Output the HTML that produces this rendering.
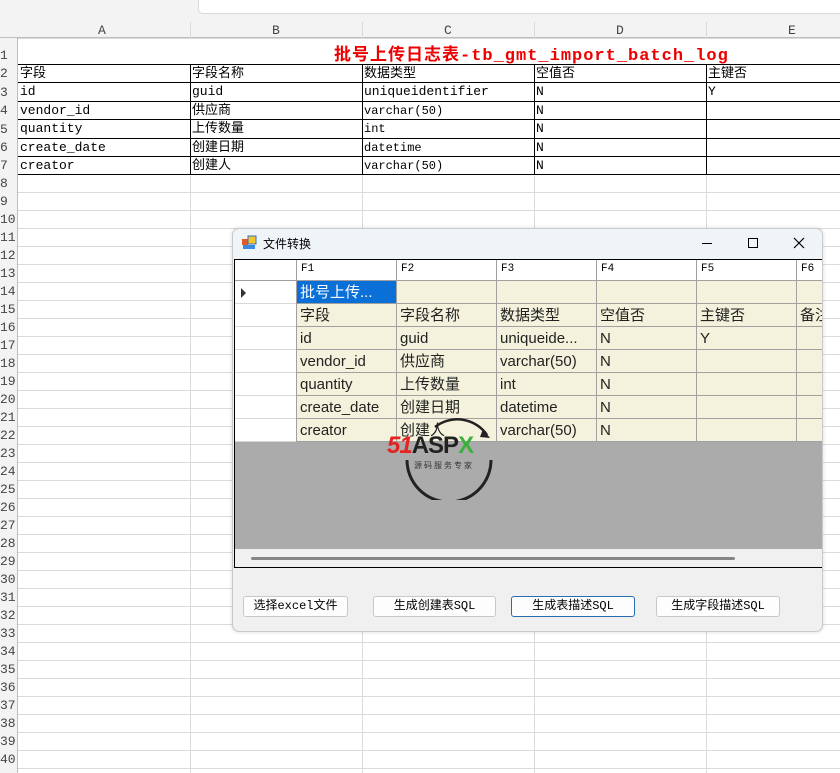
<!DOCTYPE html>
<html><head><meta charset="utf-8"><style>
*{margin:0;padding:0;box-sizing:border-box}
body{width:840px;height:773px;overflow:hidden;background:#fff;position:relative;font-family:"Liberation Mono","Noto Sans CJK SC",monospace;}
.a{position:absolute}
.hl{position:absolute;height:1px;background:#dadada}
.vl{position:absolute;width:1px;background:#dadada}
.rn{position:absolute;left:0;width:18px;font-size:13px;color:#444;text-align:left;padding-left:0}
.c{position:absolute;font-size:13px;color:#000;white-space:nowrap;line-height:18px}
.g{position:absolute;font-family:"Liberation Sans","Noto Sans CJK SC",sans-serif;font-size:15px;color:#222;white-space:nowrap;overflow:hidden;line-height:23px;padding-left:4px}
.btn{position:absolute;top:596px;height:21px;border:1px solid #c8c8c8;border-radius:3px;background:#fdfdfd;font-size:12px;text-align:center;line-height:19px;font-family:"Liberation Mono","Noto Sans CJK SC",monospace}
</style></head><body>
<div class="a" style="left:0;top:0;width:840px;height:22px;background:#f3f3f3"></div>
<div class="a" style="left:198px;top:-2px;width:650px;height:16px;background:#fff;border:1px solid #d9d9d9;border-radius:0 0 0 5px"></div>
<div class="a" style="left:0;top:22px;width:840px;height:16px;background:#f3f3f3;border-bottom:1px solid #bdbdbd"></div>
<div class="a" style="left:0;top:38px;width:18px;height:735px;background:#f3f3f3;border-right:1px solid #bdbdbd"></div>
<div id="grid"></div>
<div class="c" style="left:98px;top:22px;color:#444">A</div>
<div class="c" style="left:272px;top:22px;color:#444">B</div>
<div class="c" style="left:444px;top:22px;color:#444">C</div>
<div class="c" style="left:616px;top:22px;color:#444">D</div>
<div class="c" style="left:788px;top:22px;color:#444">E</div>
<div class="a" style="left:19px;top:39px;width:821px;height:25px;background:#fff"></div>
<div class="a" style="left:334px;top:40px;font-size:17px;font-weight:bold;color:#e00;white-space:nowrap;letter-spacing:1px;font-family:'Liberation Mono','Noto Sans CJK SC',monospace">批号上传日志表-tb_gmt_import_batch_log</div>
<div class="a" style="left:18px;top:64px;width:830px;height:111px;border-top:1px solid #000;border-bottom:1px solid #000"></div>
<div id="tb"></div>

<div class="a" style="left:232px;top:228px;width:591px;height:404px;background:#f0f0f0;border:1px solid #c9c9c9;border-radius:7px;box-shadow:0 0 4px rgba(0,0,0,.15)"></div>
<div class="a" style="left:233px;top:229px;width:589px;height:30px;background:#eff4f9;border-radius:7px 7px 0 0"></div>
<svg class="a" style="left:241px;top:235px" width="16" height="16"><rect x="1" y="4" width="6" height="6" fill="#e05a2b"/><rect x="7" y="1" width="8" height="8" fill="#f4c431" stroke="#3a6fc0"/><rect x="2" y="10" width="12" height="4" fill="#3a8be0"/></svg>
<div class="a" style="left:263px;top:235px;font-size:12px;font-family:'Liberation Sans','Noto Sans CJK SC',sans-serif">文件转换</div>
<div class="a" style="left:702px;top:243px;width:10px;height:1px;background:#000"></div>
<div class="a" style="left:748px;top:238px;width:10px;height:10px;border:1px solid #000"></div>
<svg class="a" style="left:793px;top:237px" width="12" height="12"><path d="M1 1L11 11M11 1L1 11" stroke="#000" stroke-width="1.2"/></svg>
<div class="a" style="left:234px;top:259px;width:588px;height:309px;border:1px solid #000;border-right:none;background:#ababab;overflow:hidden">
 <div id="dg"></div>
</div>
<svg class="a" style="left:395px;top:405px" width="110" height="95"><path d="M12 55 A42 42 0 0 0 96 55" fill="none" stroke="#222" stroke-width="3"/><path d="M40 22 A36 36 0 0 1 92 30" fill="none" stroke="#222" stroke-width="2.5"/><path d="M88 24 L95 33 L85 32Z" fill="#222"/></svg>
<div class="a" style="left:387px;top:432px;font:italic bold 24px 'Liberation Sans',sans-serif;color:#e52323;letter-spacing:-1px">51<span style="color:#222;font-style:normal">ASP</span><span style="color:#3ab03e;font-style:normal">X</span></div>
<div class="a" style="left:414px;top:460px;font-size:8px;color:#333;letter-spacing:2px;font-family:'Liberation Sans','Noto Sans CJK SC',sans-serif">源码服务专家</div>
<div class="btn" style="left:243px;width:105px">选择excel文件</div>
<div class="btn" style="left:373px;width:123px">生成创建表SQL</div>
<div class="btn" style="left:511px;width:124px;border-color:#2b6cb0">生成表描述SQL</div>
<div class="btn" style="left:656px;width:124px">生成字段描述SQL</div>
<script>
var h='';var y=64;var ys=[38,64];
for(var r=2;r<=40;r++){y+= r<=7?18.4:18;ys.push(Math.round(y));}
for(var i=0;i<ys.length;i++){h+='<div class="hl" style="left:18px;top:'+ys[i]+'px;width:822px"></div>';}
[190,362,534,706].forEach(function(x){h+='<div class="vl" style="left:'+x+'px;top:22px;height:751px"></div>';});
for(var r=1;r<=40;r++){var t=r==1?ys[1]-16:ys[r]-16;h+='<div class="rn" style="top:'+t+'px">'+r+'</div>';}
document.getElementById('grid').innerHTML=h;
var rows=[["字段","字段名称","数据类型","空值否","主键否"],["id","guid","uniqueidentifier","N","Y"],["vendor_id","供应商","varchar(50)","N",""],["quantity","上传数量","int","N",""],["create_date","创建日期","datetime","N",""],["creator","创建人","varchar(50)","N",""]];
var xs=[20,192,364,536,708];var t='';
rows.forEach(function(rw,i){var top=ys[i+1]+1;rw.forEach(function(v,j){t+='<div class="c" style="left:'+xs[j]+'px;top:'+top+'px;'+(/[a-z]/.test(v)&&j==2&&v!='uniqueidentifier'?'font-size:12px':'')+'">'+v+'</div>';});});
[190,362,534,706].forEach(function(x){t+='<div class="a" style="left:'+x+'px;top:64px;width:1px;height:111px;background:#000"></div>';});
for(var i=2;i<8;i++)t+='<div class="a" style="left:18px;top:'+ys[i]+'px;width:822px;height:1px;background:#000"></div>';
document.getElementById('tb').innerHTML=t;
var cx=[0,61,161,261,361,461,561],d='';
d+='<div class="a" style="left:0;top:0;width:588px;height:21px;background:#fff;border-bottom:1px solid #a0a0a0"></div>';
var hd=["F1","F2","F3","F4","F5","F6"];
for(var j=0;j<6;j++){d+='<div class="a" style="left:'+(cx[j+1]+5)+'px;top:3px;font-size:11px">'+hd[j]+'</div>';}
var data=[["批号上传...","","","","",""],["字段","字段名称","数据类型","空值否","主键否","备注"],["id","guid","uniqueide...","N","Y",""],["vendor_id","供应商","varchar(50)","N","",""],["quantity","上传数量","int","N","",""],["create_date","创建日期","datetime","N","",""],["creator","创建人","varchar(50)","N","",""]];
d+='<div class="a" style="left:0;top:21px;width:61px;height:160px;background:#fff"></div>';
d+='<div class="a" style="left:61px;top:21px;width:527px;height:160px;background:#f4f2dc"></div>';
data.forEach(function(rw,i){var top=21+i*23;rw.forEach(function(v,j){var st=(i==0&&j==0)?'background:#0a6fd6;color:#fff;':'';d+='<div class="g" style="left:'+cx[j+1]+'px;top:'+top+'px;width:100px;height:23px;'+st+'">'+v+'</div>';});
d+='<div class="a" style="left:0;top:'+(top+22)+'px;width:588px;height:1px;background:#d8d8d8"></div><div class="a" style="left:61px;top:'+(top+22)+'px;width:527px;height:1px;background:#a0a0a0"></div>';});
for(var j=1;j<7;j++)d+='<div class="a" style="left:'+cx[j]+'px;top:0;width:1px;height:181px;background:#a0a0a0"></div>';
d+='<div class="a" style="left:6px;top:28px;width:0;height:0;border-left:5px solid #333;border-top:5px solid transparent;border-bottom:5px solid transparent"></div>';
d+='<div class="a" style="left:0;top:289px;width:588px;height:20px;background:#f0f0f0"></div>';
d+='<div class="a" style="left:16px;top:297px;width:484px;height:3px;background:#858585;border-radius:2px"></div>';
document.getElementById('dg').innerHTML=d;
</script>
</body></html>
